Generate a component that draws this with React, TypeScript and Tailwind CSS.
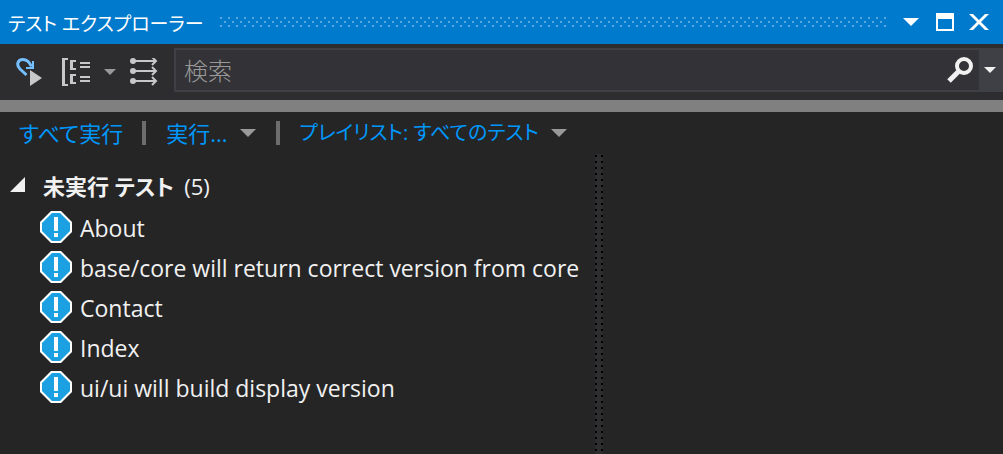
import type { ReactNode } from 'react';

const tests = [
  'About',
  'base/core will return correct version from core',
  'Contact',
  'Index',
  'ui/ui will build display version',
];

const Caret = ({ className = '' }: { className?: string }) => (
  <svg viewBox="0 0 16 8" className={`shrink-0 fill-current ${className}`} aria-hidden="true">
    <path d="M0 0h16L8 8z" />
  </svg>
);

const TitleBar = () => (
  <header className="flex h-11 items-center bg-[#007acc] pr-[14px] pl-2 text-white">
    <h1 className="pt-1 text-[19px] leading-7 whitespace-nowrap">テスト エクスプローラー</h1>
    <svg className="mr-4 ml-4 h-[10px] min-w-0 flex-1" aria-hidden="true">
      <defs>
        <pattern id="grip" width="8" height="8" patternUnits="userSpaceOnUse">
          <path d="M0 0h2v2H0zM4 4h2v2H4z" fill="#59a9e0" />
        </pattern>
      </defs>
      <rect width="100%" height="10" fill="url(#grip)" />
    </svg>
    <button type="button" aria-label="ウィンドウの位置">
      <Caret className="h-2 w-4" />
    </button>
    <button type="button" aria-label="最大化" className="ml-[17px]">
      <svg viewBox="0 0 18 18" className="size-[18px]" fill="currentColor">
        <path fillRule="evenodd" d="M0 0h18v18H0zM2 6v10h14V6z" />
      </svg>
    </button>
    <button type="button" aria-label="閉じる" className="ml-[15px]">
      <svg viewBox="0 0 20 16" className="h-4 w-5" fill="currentColor">
        <path d="M0 0h4l6 6 6-6h4l-8 8 8 8h-4l-6-6-6 6H0l8-8z" />
      </svg>
    </button>
  </header>
);

const Toolbar = () => (
  <div className="flex h-14 items-center bg-[#2d2d30] pl-4 text-[#c8c8c8]">
    <button type="button" aria-label="ビルド後にテストを実行">
      <svg viewBox="0 0 26 30" className="h-[30px] w-[26px]" fill="none">
        <path d="M10.500 18 4 12C0 8 1.500 2.500 7 2.500c4 0 6.500 2.500 8.500 7" stroke="#75beff" strokeWidth="3" />
        <path d="M17 4v7H10" stroke="#75beff" strokeWidth="2" />
        <path d="M14 13v16l12-8z" fill="#c8c8c8" />
      </svg>
    </button>
    <button type="button" aria-label="グループ化" className="ml-5 flex items-center">
      <svg viewBox="0 0 28 28" className="size-7" fill="currentColor">
        <path d="M0 0h6v2H3v24h3v2H0zM8 2h6v2h-3v6h3v2H8zM8 16h6v2h-3v6h3v2H8zM18 4h10v2H18zM18 8h10v2H18zM18 18h10v2H18zM18 22h10v2H18z" />
      </svg>
      <Caret className="ml-[14px] h-[6px] w-3 text-[#999999]" />
    </button>
    <button type="button" aria-label="並列実行" className="ml-[14px]">
      <svg viewBox="0 0 28 28" className="size-7" fill="none" stroke="currentColor" strokeWidth="2">
        <path d="M3 3h22M3 13h22M3 23h22" />
        <path d="M22 -1l4 4-4 4M22 9l4 4-4 4M22 19l4 4-4 4" />
        <g fill="currentColor" stroke="none">
          <circle cx="3" cy="3" r="3" />
          <circle cx="3" cy="13" r="3" />
          <circle cx="3" cy="23" r="3" />
        </g>
      </svg>
    </button>
    <form className="mb-1 ml-4 flex min-w-0 flex-1 items-center" role="search">
      <div className="flex h-11 min-w-0 flex-1 items-stretch border-2 border-r-0 border-[#3f3f46] bg-[#333337]">
        <input
          type="text"
          aria-label="検索"
          placeholder="検索"
          className="min-w-0 flex-1 bg-transparent pt-px pl-2 text-[24px] text-[#f1f1f1] outline-none placeholder:font-light placeholder:text-[#999999]"
        />
        <button type="button" aria-label="検索を実行" className="px-[6px] text-[#f1f1f1]">
          <svg viewBox="0 0 26 26" className="size-[26px]" fill="none" stroke="currentColor">
            <circle cx="17" cy="9" r="7" strokeWidth="4" />
            <path d="M12 14 2 24" strokeWidth="5" />
          </svg>
        </button>
        <button type="button" aria-label="検索オプション" className="flex w-6 items-center justify-center bg-[#3f3f46] pr-[2px] text-[#f1f1f1]">
          <Caret className="h-[6px] w-3" />
        </button>
      </div>
    </form>
  </div>
);

const Separator = () => <span className="h-6 w-1 shrink-0 bg-[#6d6d6d]" />;

const LinkItem = ({ children, menu }: { children: ReactNode; menu?: boolean }) => (
  <a href="#" className="flex items-center text-[#0097fb]">
    {children}
    {menu && <Caret className="ml-3 h-2 w-4 text-[#999999]" />}
  </a>
);

const NotRunIcon = () => (
  <svg viewBox="0 0 32 32" className="size-8 shrink-0" aria-hidden="true">
    <path d="M11 0h10l11 11v10L21 32H11L0 21V11z" fill="#ffffff" />
    <path d="M12 2h8l10 10v8L20 30h-8L2 20v-8z" fill="#1ba1e2" />
    <path d="M14 6h4v14h-4zM14 22h4v4h-4z" fill="#ffffff" />
  </svg>
);

const Splitter = () => (
  <svg className="w-2 shrink-0 self-stretch" aria-hidden="true">
    <defs>
      <pattern id="splitter" width="6" height="6" patternUnits="userSpaceOnUse">
        <path d="M0 1h2v2H0z" fill="#000000" />
      </pattern>
    </defs>
    <rect width="8" height="100%" fill="#2d2d30" />
    <rect width="8" height="100%" fill="url(#splitter)" />
  </svg>
);

const App = () => (
  <div className="flex min-h-screen flex-col bg-[#252526] font-['Open_Sans','Noto_Sans_CJK_JP',sans-serif] text-[#f1f1f1] [font-feature-settings:'palt']">
    <TitleBar />
    <Toolbar />
    <div className="h-3 bg-[#808080]" />

    <nav className="flex h-[42px] items-center pl-[19px] text-[22px] leading-8 whitespace-nowrap">
      <LinkItem>すべて実行</LinkItem>
      <div className="flex items-center gap-5 pl-[19px]">
        <Separator />
        <LinkItem menu>実行...</LinkItem>
        <Separator />
        <LinkItem menu>
          <span className="text-[20px]">プレイリスト: すべてのテスト</span>
        </LinkItem>
      </div>
    </nav>

    <main className="flex flex-1">
      <section className="w-[59.32%] pt-4">
        <h2>
          <button type="button" aria-expanded="true" className="flex h-9 items-center pb-1 pl-[10px] text-[22px]">
            <svg viewBox="0 0 15 15" className="mr-[18px] mb-1 size-[15px]" fill="currentColor" aria-hidden="true">
              <path d="M15 0v15H0z" />
            </svg>
            <span className="font-bold">未実行 テスト</span>
            <span className="ml-[10px]">(5)</span>
          </button>
        </h2>
        <ul className="mt-px">
          {tests.map((name) => (
            <li key={name} className="flex h-10 items-center gap-2 pl-10 text-[23px] leading-8 whitespace-nowrap">
              <NotRunIcon />
              <span className="pt-[2px]">{name}</span>
            </li>
          ))}
        </ul>
      </section>
      <Splitter />
      <section className="flex-1" />
    </main>
  </div>
);

export default App;
